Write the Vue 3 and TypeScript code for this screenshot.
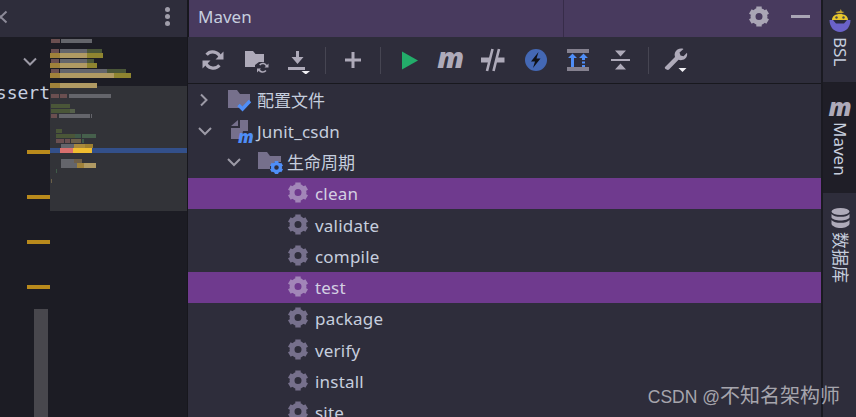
<script setup lang="ts">
interface Seg { x: number; y: number; w: number; h: number; c: string }

const br = '#6a4f50', gy = '#64656b', gn = '#4a5638', go = '#a0823a', ta = '#b09a63', ol = '#8f8530'
const raw: [number, number, [number, number, string][]][] = [
  [39, 4, [[51, 60, br], [61, 92, gy]]],
  [49, 4, [[51, 59, br], [60, 87, gy], [87, 102, gn]]],
  [53, 5, [[50, 60, go], [60, 87, ta], [87, 103, ol]]],
  [59, 4, [[51, 59, br], [60, 87, gy], [87, 94, gn]]],
  [63, 5, [[50, 60, go], [60, 87, ta], [87, 97, ol]]],
  [69, 4, [[51, 59, br], [60, 107, gy], [107, 126, gn]]],
  [73, 5, [[50, 60, go], [60, 114, ta], [114, 131, ol]]],
  [83, 5, [[50, 60, go], [60, 97, ta]]],
  [94, 4, [[51, 59, br], [60, 67, br], [69, 111, gy]]],
  [104, 4, [[51, 70, gn]]],
  [109, 4, [[51, 70, gn], [70, 75, '#55604a']]],
  [114, 4, [[51, 57, br], [59, 90, gy], [91, 92, gy]]],
  [129, 4, [[56, 62, gn]]],
  [134, 4, [[56, 75, gn], [75, 81, '#3f5a48'], [82, 96, '#46604c']]],
  [139, 4, [[56, 64, br], [65, 70, br], [71, 81, '#6a5f48'], [82, 84, '#3f5a48']]],
  [144, 4, [[61, 74, gy], [74, 85, '#a88a3c'], [85, 93, '#9c7f30']]],
  [148, 5, [[60, 73, '#d9706e'], [73, 92, '#f0bd30']]],
  [159, 4, [[61, 74, gy], [74, 82, '#6e5f48']]],
  [163, 5, [[61, 77, gy], [77, 84, '#a0823a'], [84, 96, ta]]],
  [169, 4, [[56, 57, '#3f5a48']]],
  [179, 4, [[51, 52, '#6a5f48']]],
]
const segs: Seg[] = raw.flatMap(([y, h, parts]) =>
  parts.map(([a, b, c]) => ({ x: a - 50, y: y - 37, w: b - a, h, c })),
)

const goals = ['clean', 'validate', 'compile', 'test', 'package', 'verify', 'install', 'site']
const selected = new Set(['clean', 'test'])
const marks = [0, 1, 2, 3]
</script>

<template>
  <div class="ide">
    <svg class="defs" width="0" height="0" aria-hidden="true">
      <defs>
        <symbol id="gear" viewBox="2 2 20 20">
          <circle cx="12" cy="12" r="6" fill="none" stroke="currentColor" stroke-width="5" />
          <g stroke="currentColor" stroke-width="5.400">
            <line x1="12" y1="2" x2="12" y2="6" />
            <line x1="12" y1="18" x2="12" y2="22" />
            <line x1="3.300" y1="7" x2="6.800" y2="9" />
            <line x1="20.700" y1="7" x2="17.200" y2="9" />
            <line x1="3.300" y1="17" x2="6.800" y2="15" />
            <line x1="20.700" y1="17" x2="17.200" y2="15" />
          </g>
        </symbol>
      </defs>
    </svg>

    <section class="left">
      <header class="left-bar">
        <svg class="close" width="8" height="14" viewBox="0 0 8 14">
          <path d="M-5 1.500 6.500 12.500M6.500 1.500-5 12.500" stroke="#8c8a98" stroke-width="2" fill="none" />
        </svg>
        <div class="dots"><i></i><i></i><i></i></div>
      </header>
      <div class="editor">
        <div class="gutter">
          <div class="nav">
            <svg width="14" height="9" viewBox="0 0 14 9">
              <path d="M1 1.500 7 7.500 13 1.500" stroke="#9c9aa6" stroke-width="2" fill="none" />
            </svg>
          </div>
          <div class="code"><span>assert</span></div>
          <div class="marks">
            <i v-for="m in marks" :key="m"></i>
          </div>
          <div class="thumb"></div>
        </div>
        <svg class="minimap" width="137" height="380" viewBox="0 0 137 380">
          <rect x="0" y="49" width="137" height="125" fill="#323338" />
          <rect x="0" y="111" width="137" height="5" fill="#33508a" />
          <rect
            v-for="(s, i) in segs"
            :key="i"
            :x="s.x"
            :y="s.y"
            :width="s.w"
            :height="s.h"
            :fill="s.c"
          />
        </svg>
      </div>
    </section>

    <section class="maven">
      <header class="title">
        <div class="title-main">Maven</div>
        <div class="title-side">
          <svg class="title-gear" width="20" height="21"><use href="#gear" /></svg>
          <i class="minimize"></i>
        </div>
      </header>

      <div class="toolbar">
        <button class="tool">
          <svg width="22" height="22" viewBox="0 0 22 22">
            <g fill="none" stroke="#aeaab9" stroke-width="3.200">
              <path d="M18.400 8.800A8 8 0 0 0 4.600 5.800" />
              <path d="M3.600 13.200A8 8 0 0 0 17.400 16.200" />
            </g>
            <path d="M13.500 10.500h8V2.500z" fill="#aeaab9" />
            <path d="M8.500 11.500H.5V19.500z" fill="#aeaab9" />
          </svg>
        </button>
        <button class="tool">
          <svg width="27" height="28" viewBox="0 0 27 28">
            <path d="M3 5h8l2.500 3H22v8h-5l-4 3v2H3z" fill="#aeaab9" />
            <g fill="none" stroke="#aeaab9" stroke-width="1.600">
              <path d="M24.700 20.500a4 4 0 0 0-7-1.500" />
              <path d="M16.900 23a4 4 0 0 0 7 1.500" />
            </g>
            <path d="M22.500 21.500h4v-4zM19 22.500h-4v4z" fill="#aeaab9" />
          </svg>
        </button>
        <button class="tool">
          <svg width="26" height="28" viewBox="0 0 26 28">
            <path d="M11 5h3v6h4.500l-6 7-6-7H11z" fill="#aeaab9" />
            <path d="M3 21h17v3H3z" fill="#aeaab9" />
            <path d="M16.500 25h8.500l-4.200 3.500z" fill="#f0eff4" />
          </svg>
        </button>
        <i class="sep"></i>
        <button class="tool">
          <svg width="18" height="18" viewBox="0 0 18 18">
            <path d="M7.500 1h3v6.500H17v3h-6.500V17h-3v-6.500H1v-3h6.500z" fill="#aeaab9" />
          </svg>
        </button>
        <i class="sep"></i>
        <button class="tool play">
          <svg width="16" height="19" viewBox="0 0 16 19">
            <path d="M0 .5 16 9.500 0 18.500z" fill="#23ac6a" />
          </svg>
        </button>
        <button class="tool"><span class="m-logo">m</span></button>
        <button class="tool">
          <svg width="24" height="24" viewBox="0 0 24 24">
            <path d="M0 9.500h8v5H0zM16 9.500h7.500v5H16z" fill="#aeaab9" />
            <path d="M11.500 1 6 23M18 1 12.500 23" stroke="#aeaab9" stroke-width="2.600" fill="none" />
          </svg>
        </button>
        <button class="tool">
          <svg width="24" height="24" viewBox="0 0 24 24">
            <circle cx="12" cy="12" r="11" fill="#4468b4" />
            <path d="M14.500 4 7 13.500h4L9 20l7.500-9.500h-4z" fill="#101116" />
          </svg>
        </button>
        <button class="tool">
          <svg width="24" height="24" viewBox="0 0 24 24">
            <path d="M1 1h22v4H1zM1 19h22v4H1z" fill="#85818f" />
            <path d="M5 19V10H2l4.500-4.500L11 10H8v9z" fill="#4f8ef7" />
            <path d="M13 10l4.500-4.500L22 10h-3v2h-3v-2zM16 13.500h3v2h-3zM16 17h3v2h-3z" fill="#4f8ef7" />
          </svg>
        </button>
        <button class="tool">
          <svg width="20" height="20" viewBox="0 0 20 20">
            <path d="M0 9h19v2H0z" fill="#aeaab9" />
            <path d="M4 .5h11l-5.500 6zM4 19.500h11l-5.500-6z" fill="#aeaab9" />
          </svg>
        </button>
        <i class="sep"></i>
        <button class="tool">
          <svg width="24" height="26" viewBox="0 0 24 26">
            <path d="M1 20 11 10c-1-3 0-6 2.500-7.500C15.500 1.300 18 1.300 19.500 2l-4 3.500 1 3 3 .8 3.500-3.500c.5 2 0 4.500-2 6-2 1.500-4.500 1.800-6.500 1L5 22.500c-1.500 1.300-5-1-4-2.500z" fill="#aeaab9" />
            <path d="M14.500 21h8l-4 4z" fill="#f0eff4" />
          </svg>
        </button>
      </div>

      <div class="tree">
        <div class="row row-root">
          <svg class="chev" width="14" height="14" viewBox="0 0 14 14">
            <path d="M3 1.500 8.500 7 3 12.500" stroke="#9c9aa6" stroke-width="2" fill="none" />
          </svg>
          <svg class="ic-conf" width="24" height="22" viewBox="0 0 24 22">
            <path d="M0 0h9l3 4h10v7l-7 7H0z" fill="#76708c" />
            <path d="M10.500 15 14.500 19 22 11" stroke="#4f8ef7" stroke-width="3.400" fill="none" />
          </svg>
          <span class="label">配置文件</span>
        </div>
        <div class="row row-root">
          <svg class="chev" width="14" height="10" viewBox="0 0 14 10">
            <path d="M1 2 7 8 13 2" stroke="#9c9aa6" stroke-width="2" fill="none" />
          </svg>
          <div class="ic-project">
            <svg width="17" height="22" viewBox="0 0 17 22">
              <path d="M0 7 7 1v6zM9 1h8v11h-5l-2 8H0V9h9z" fill="#76708c" />
            </svg>
            <span class="small-m">m</span>
          </div>
          <span class="label latin">Junit_csdn</span>
        </div>
        <div class="row row-life">
          <svg class="chev" width="14" height="10" viewBox="0 0 14 10">
            <path d="M1 2 7 8 13 2" stroke="#9c9aa6" stroke-width="2" fill="none" />
          </svg>
          <div class="ic-life">
            <svg width="23" height="18" viewBox="0 0 23 18">
              <path d="M0 0h9l3 4h11v6h-6l-5 4v3H0z" fill="#76708c" />
            </svg>
            <svg class="life-gear" width="13" height="13"><use href="#gear" /></svg>
          </div>
          <span class="label">生命周期</span>
        </div>
        <div
          v-for="g in goals"
          :key="g"
          class="row row-goal"
          :class="{ selected: selected.has(g) }"
        >
          <svg class="goal-gear" width="20" height="21"><use href="#gear" /></svg>
          <span class="label latin">{{ g }}</span>
        </div>
      </div>
    </section>

    <aside class="strip">
      <div class="tab tab-bsl">
        <svg width="22" height="24" viewBox="0 0 22 24">
          <path d="M.5 11H21.500C21.500 18 17 23 11 23S.5 18 .5 11z" fill="#6a62c8" />
          <path d="M4 11h14l-3 3.500H7z" fill="#2a2a3c" />
          <path d="M3 11C3 7 6.500 5 11 5s8 2 8 6z" fill="#e8c62c" />
          <circle cx="7.500" cy="8.500" r="1.200" fill="#4a4a50" />
          <circle cx="14.500" cy="8.500" r="1.200" fill="#4a4a50" />
          <path d="M6.500 3 11 2l.8-2 1 2.500 2.700.5-2.700 1.300H8z" fill="#c8a830" />
        </svg>
        <span class="tab-text">BSL</span>
      </div>
      <div class="tab tab-maven">
        <span class="m-logo m-side">m</span>
        <span class="tab-text">Maven</span>
      </div>
      <div class="tab tab-db">
        <svg width="19" height="20" viewBox="0 0 18 20">
          <ellipse cx="9" cy="3.500" rx="9" ry="3.500" fill="#aeaab9" />
          <path d="M0 6c1.500 2 5 2.800 9 2.800S16.500 8 18 6v3.500c-1 2-5 3-9 3s-8-1-9-3z" fill="#aeaab9" />
          <path d="M0 12c1.500 2 5 2.800 9 2.800s7.500-.8 9-2.800v4c-1 2.500-5 4-9 4s-8-1.500-9-4z" fill="#aeaab9" />
        </svg>
        <span class="tab-text sideways">数据库</span>
      </div>
    </aside>

    <div class="watermark"><span class="wm-latin">CSDN @</span>不知名架构师</div>
  </div>
</template>

<style scoped>
.ide {
  display: flex;
  width: 856px;
  height: 417px;
  overflow: hidden;
  background: #2e2d3b;
  font-family: "Noto Sans", "Noto Sans CJK SC", sans-serif;
  color: #c6cede;
  position: relative;
}
.defs { position: absolute; }

.left {
  width: 187px;
  flex: none;
  background: #1c1c24;
  display: flex;
  flex-direction: column;
}
.left-bar {
  height: 37px;
  flex: none;
  background: #2e2d3b;
  display: flex;
  align-items: center;
  justify-content: space-between;
  padding-right: 17px;
}
.close { margin-top: -4px; }
.dots { display: flex; flex-direction: column; gap: 2px; margin-top: -5px; }
.dots i { width: 5px; height: 5px; border-radius: 50%; background: #a09eaa; }
.editor { flex: 1; display: flex; min-height: 0; }
.gutter {
  width: 50px;
  flex: none;
  display: flex;
  flex-direction: column;
  overflow: hidden;
}
.nav { height: 14px; margin-top: 20px; padding-left: 23px; }
.nav svg { display: block; }
.code {
  display: flex;
  justify-content: flex-end;
  height: 24px;
  margin-top: 10px;
  font: 18px/24px "DejaVu Sans Mono", monospace;
  color: #c8d0e0;
}
.marks { display: flex; flex-direction: column; gap: 41px; margin-top: 45px; padding-left: 27px; }
.marks i { display: block; height: 4px; background: #b98a1c; }
.thumb { width: 14px; flex: 1; margin: 20px 0 0 34px; background: #48474d; }
.minimap { flex: none; display: block; }

.maven {
  width: 633px;
  flex: none;
  display: flex;
  flex-direction: column;
  border-left: 1px solid #17171d;
}
.title {
  height: 37px;
  flex: none;
  display: flex;
  background: #483a5e;
  border-left: 1px solid #17171d;
}
.title-main {
  width: 375px;
  box-sizing: border-box;
  padding-left: 9px;
  font-size: 17px;
  line-height: 33px;
  border-right: 1px solid #372c49;
}
.title-side {
  flex: 1;
  display: flex;
  align-items: center;
  justify-content: flex-end;
  padding: 0 11px 4px 0;
  color: #a9a5b5;
  gap: 22px;
}
.title-gear { display: block; }
.minimize { display: block; width: 19px; height: 3px; background: #a9a5b5; }

.toolbar {
  height: 46px;
  flex: none;
  display: flex;
  align-items: center;
  padding-left: 4px;
  border-bottom: 1px solid #18181e;
}
.tool {
  width: 42.500px;
  flex: none;
  height: 30px;
  padding: 0;
  border: 0;
  background: none;
  display: flex;
  align-items: center;
  justify-content: center;
  font-family: inherit;
}
.tool svg { display: block; }
.play svg { margin-left: 4px; }
.sep { flex: none; width: 1px; height: 27px; margin: 0 5.750px; background: #464552; }
.m-logo {
  font: italic 800 29px/30px "Open Sans", sans-serif;
  color: #aeaab9;
  margin-top: -6px;
}

.tree { flex: 1; min-height: 0; overflow: hidden; }
.row {
  height: 31.250px;
  display: flex;
  align-items: center;
  font-size: 17px;
  white-space: nowrap;
}
.label { line-height: 31px; margin-top: 1px; }
.latin { letter-spacing: 0.2px; }
.chev { display: block; flex: none; }
.row-root .chev { margin-left: 10px; }
.ic-conf { margin-left: 16px; margin-right: 5px; margin-top: 3px; flex: none; }
.ic-project {
  position: relative;
  margin-left: 19px;
  width: 24px;
  margin-right: 2px;
  height: 24px;
  flex: none;
}
.ic-project svg { display: block; }
.small-m {
  position: absolute;
  left: 7px;
  bottom: -1px;
  font: italic 800 17px/14px "Open Sans", sans-serif;
  color: #4f8ef7;
}
.row-life .chev { margin-left: 39px; }
.ic-life {
  position: relative;
  margin-left: 17px;
  width: 26px;
  height: 24px;
  margin-right: 3px;
  flex: none;
  padding-top: 2px;
  box-sizing: border-box;
}
.ic-life svg:first-child { display: block; }
.life-gear { position: absolute; left: 12px; top: 11px; color: #4f8ef7; }
.row-goal { padding-left: 100px; }
.goal-gear { color: #76708c; flex: none; margin-top: -1px; margin-right: 7px; display: block; }
.selected { background: #6f3a8e; }
.selected .goal-gear { color: #a286b8; }
.selected .label { color: #d3cfe2; }
.watermark {
  position: absolute;
  right: 16px;
  bottom: 8px;
  font-size: 20px;
  line-height: 24px;
  font-family: "Liberation Sans", "Noto Sans CJK SC", sans-serif;
  color: #a6a5ad;
  white-space: nowrap;
}
.wm-latin { font-size: 17.500px; }

.strip {
  width: 36px;
  flex: none;
  border-left: 2px solid #1a1a21;
  display: flex;
  flex-direction: column;
  align-items: center;
  box-sizing: border-box;
}
.tab {
  width: 100%;
  display: flex;
  flex-direction: column;
  align-items: center;
  box-sizing: border-box;
}
.tab svg { display: block; flex: none; }
.tab-bsl { height: 83px; padding-top: 9px; border-bottom: 1px solid #1e1e26; }
.tab-maven { height: 110px; padding-top: 11px; background: #1f1e27; }
.tab-db { flex: 1; padding-top: 15px; }
.tab-text {
  writing-mode: vertical-rl;
  font-size: 17px;
  line-height: 22px;
  color: #c6cede;
  margin-top: 4px;
}
.sideways { text-orientation: sideways; }
.m-side { font-size: 25px; line-height: 24px; margin-top: 0; }
</style>

<style>
body { background: #2e2d3b; }
</style>
